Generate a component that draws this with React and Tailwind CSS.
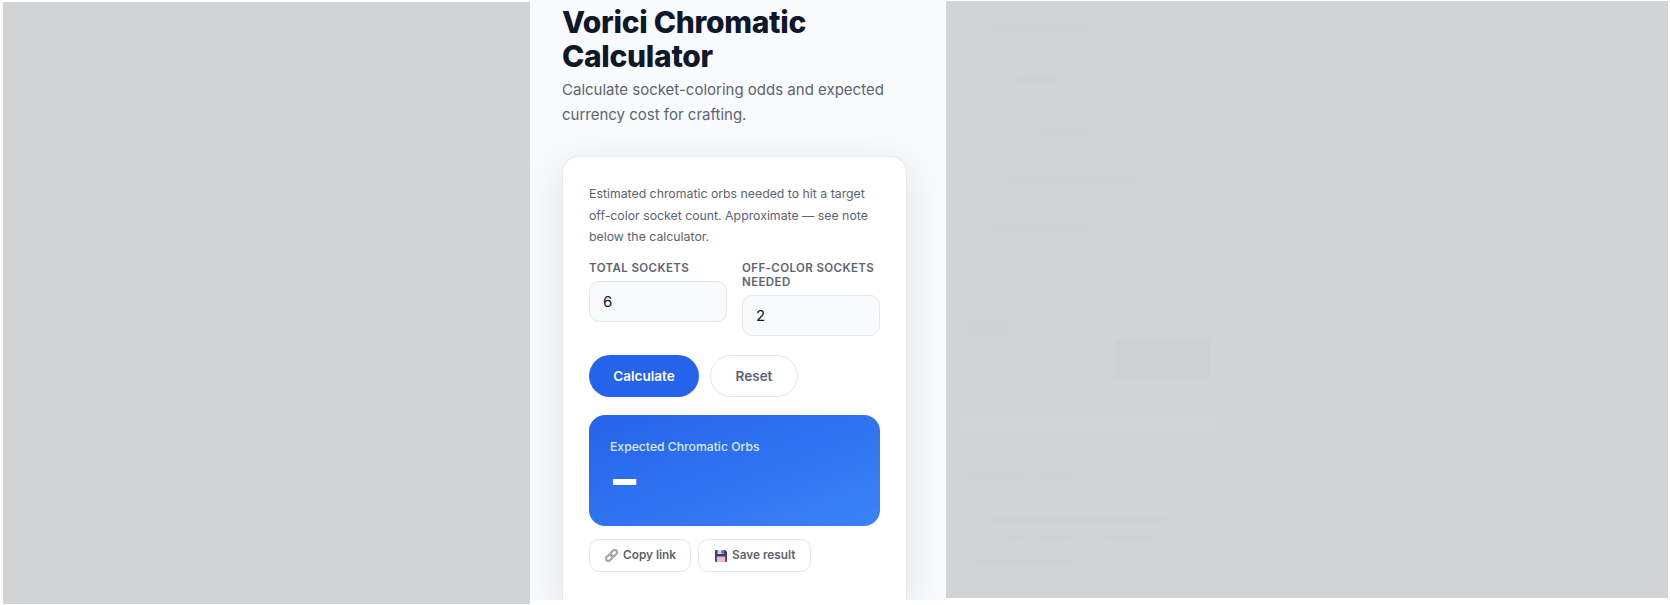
const ChainIcon = () => (
  <svg width="13" height="13" viewBox="0 0 13 13" className="shrink-0" fill="none" stroke="#a9a9ab" strokeWidth="2.200">
    <rect x="0.500" y="6.450" width="7.500" height="4.600" rx="2.300" transform="rotate(-45 4.250 8.750)" />
    <rect x="5" y="1.950" width="7.500" height="4.600" rx="2.300" transform="rotate(-45 8.750 4.250)" />
  </svg>
);

const FloppyIcon = () => (
  <svg width="12" height="12" viewBox="0 0 12 12" className="shrink-0">
    <path d="M0 1A1 1 0 0 1 1 0H10.300L12 1.700V11a1 1 0 0 1-1 1H1a1 1 0 0 1-1-1z" fill="#3f3a72" />
    <rect x="2.500" y="0" width="6" height="4" fill="#d8d6e6" />
    <rect x="6.500" y="0.500" width="1.300" height="3" fill="#3f3a72" />
    <rect x="1.800" y="6.500" width="8.400" height="5.500" fill="#efb6d2" />
  </svg>
);

const Field = ({ label, value }) => (
  <label className="flex flex-col gap-[6px]">
    <span className="text-[11.5px] leading-[14px] font-semibold uppercase tracking-[0.4px] text-[#5b6472]">
      {label}
    </span>
    <input
      defaultValue={value}
      className="h-[41px] w-full rounded-[10px] border border-[#e5e7eb] bg-[#f9fafb] px-[13px] pt-px text-[15px] text-[#111827] outline-none"
    />
  </label>
);

const ghostBar = "bg-[#d0d1d3]";
const ghostLine = "h-px w-[272px] ml-[14px] bg-[#d3d5d7]";

const BlurredSidebar = () => (
  <aside className="mt-[1px] h-[597px] w-[722px] overflow-hidden bg-[#d1d3d5]">
    <div className={`mt-[23px] ml-[47px] h-[8px] w-[96px] ${ghostBar}`} />
    <div className="mt-[43px] ml-[52px] flex h-[8px] items-center">
      <div className={`h-[5px] w-[5px] ${ghostBar}`} />
      <div className={`ml-[14px] h-[8px] w-[39px] ${ghostBar}`} />
      <div className={`ml-[49px] h-[5px] w-[5px] ${ghostBar}`} />
    </div>
    <div className={`mt-[45px] ml-[93px] h-[8px] w-[50px] ${ghostBar}`} />
    <div className={`mt-[39px] ml-[62px] h-[8px] w-[128px] ${ghostBar}`} />
    <div className={`mt-[40px] ml-[47px] h-[8px] w-[96px] ${ghostBar}`} />
    <div className={`mt-[72px] ${ghostLine}`} />
    <div className={`mt-[16px] ml-[21px] h-[15px] w-[41px] ${ghostBar}`} />
    <div className="mt-[4px] ml-[170px] h-[40px] w-[95px] rounded-[4px] bg-[#ced0d2]" />
    <div className={`mt-[18px] ${ghostLine}`} />
    <div className="mt-[18px] ml-[14px] h-[16px] w-[255px] bg-[#d2d4d6]" />
    <div className="mt-[39px] ml-[23px] flex h-[9px] gap-[16px]">
      <div className={`w-[54px] ${ghostBar}`} />
      <div className={`w-[32px] ${ghostBar}`} />
    </div>
    <div className={`mt-[36px] ml-[47px] h-[6px] w-[173px] ${ghostBar}`} />
    <div className="mt-[13px] ml-[62px] flex h-[6px] gap-[16px]">
      <div className={`w-[15px] ${ghostBar}`} />
      <div className={`w-[32px] ${ghostBar}`} />
      <div className={`ml-[18px] w-[47px] ${ghostBar}`} />
    </div>
    <div className={`mt-[18px] ml-[30px] h-[7px] w-[95px] ${ghostBar}`} />
  </aside>
);

export default function App() {
  return (
    <div className="flex h-[605px] w-[1670px] items-start overflow-hidden bg-white font-['Inter',sans-serif]">
      <div className="ml-[3px] mt-[2px] h-[602px] w-[527px] bg-[#d1d3d5]" />

      <main className="h-[600px] w-[416px] overflow-hidden bg-[#f9fafc] px-[32px]">
        <h1 className="pt-[5px] text-[30px] leading-[34px] font-extrabold tracking-[-0.3px] text-[#0f172a]">
          Vorici Chromatic Calculator
        </h1>
        <p className="mt-[5px] text-[15px] leading-[24.5px] text-[#5b6472]">
          Calculate socket-coloring odds and expected currency cost for crafting.
        </p>

        <section className="mt-[29px] h-[444px] w-[345px] rounded-t-[16px] border border-b-0 border-[#e5e7eb] bg-white px-[26px] pt-[26px] shadow-[0_10px_40px_rgba(15,23,42,0.1)]">
          <p className="text-[12.300px] leading-[21.500px] text-[#5b6472]">
            Estimated chromatic orbs needed to hit a target off-color socket count. Approximate — see note below the calculator.
          </p>

          <div className="mt-[13px] grid grid-cols-2 items-start gap-[15px]">
            <Field label="Total sockets" value="6" />
            <Field label="Off-color sockets needed" value="2" />
          </div>

          <div className="mt-[19px] flex gap-[11px]">
            <button className="h-[42px] w-[110px] rounded-full bg-[#2563eb] pt-px text-[13.500px] font-semibold text-white">
              Calculate
            </button>
            <button className="h-[42px] w-[88px] rounded-full border border-[#e5e7eb] bg-white pt-px text-[13.500px] font-semibold text-[#5b6472]">
              Reset
            </button>
          </div>

          <div className="mt-[18px] h-[111px] rounded-[16px] bg-gradient-to-br from-[#2563eb] to-[#3b82f6] px-[21px] pt-[22px]">
            <div className="text-[12.200px] leading-[20px] font-medium text-[#dbeafe]">Expected Chromatic Orbs</div>
            <div className="mt-[2px] ml-[3px] text-[46px] leading-[40px] font-extrabold text-white">–</div>
          </div>

          <div className="mt-[13px] flex gap-[7px]">
            <button className="flex h-[33px] items-center gap-[5px] rounded-[10px] border border-[#e5e7eb] bg-white pl-[15px] pr-[14px] pt-px text-[11.800px] font-semibold text-[#5b6472]">
              <ChainIcon />
              Copy link
            </button>
            <button className="flex h-[33px] items-center gap-[5px] rounded-[10px] border border-[#e5e7eb] bg-white pl-[16px] pr-[15px] pt-px text-[11.800px] font-semibold text-[#5b6472]">
              <FloppyIcon />
              Save result
            </button>
          </div>
        </section>
      </main>

      <BlurredSidebar />
    </div>
  );
}
